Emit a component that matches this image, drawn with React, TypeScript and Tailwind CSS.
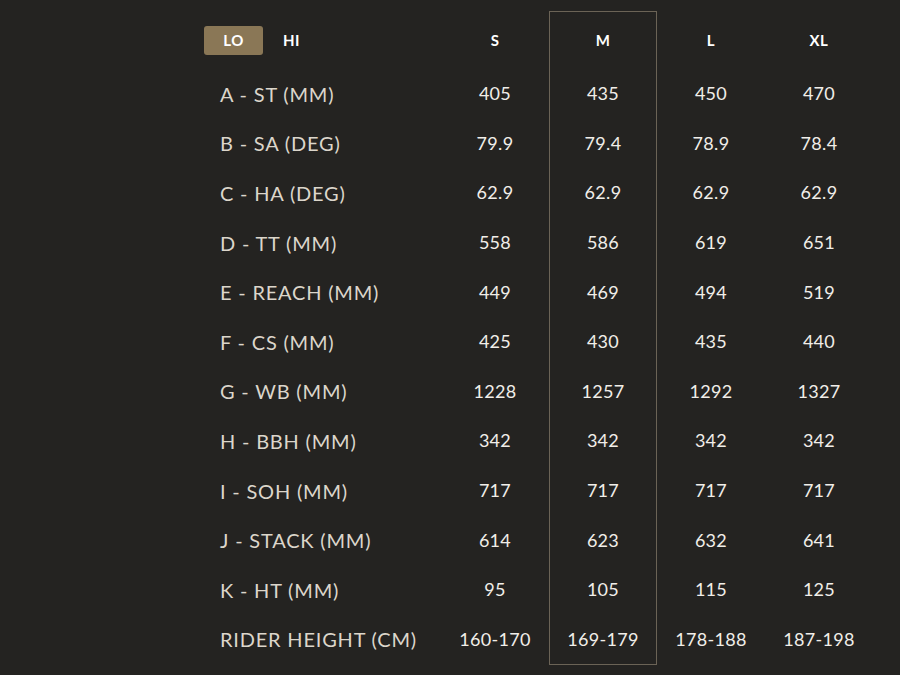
const sizes = ['S', 'M', 'L', 'XL'];

const rows: [string, string[]][] = [
  ['A - ST (MM)', ['405', '435', '450', '470']],
  ['B - SA (DEG)', ['79.9', '79.4', '78.9', '78.4']],
  ['C - HA (DEG)', ['62.9', '62.9', '62.9', '62.9']],
  ['D - TT (MM)', ['558', '586', '619', '651']],
  ['E - REACH (MM)', ['449', '469', '494', '519']],
  ['F - CS (MM)', ['425', '430', '435', '440']],
  ['G - WB (MM)', ['1228', '1257', '1292', '1327']],
  ['H - BBH (MM)', ['342', '342', '342', '342']],
  ['I - SOH (MM)', ['717', '717', '717', '717']],
  ['J - STACK (MM)', ['614', '623', '632', '641']],
  ['K - HT (MM)', ['95', '105', '115', '125']],
  ['RIDER HEIGHT (CM)', ['160-170', '169-179', '178-188', '187-198']],
];

const App = () => {
  return (
    <div className="w-[900px] h-[675px] bg-[#242321] overflow-hidden font-['Lato',sans-serif]">
      <div className="ml-[204px] mt-[11px] flex">
        {/* Labels column */}
        <div className="w-[237px] shrink-0">
          <div className="h-[58px] flex items-center gap-[20px]">
            <button className="w-[59px] h-[29px] rounded-[3px] bg-[#8a7756] text-white text-[15px] font-bold tracking-[0.5px] mt-px">
              LO
            </button>
            <button className="text-white text-[15px] font-bold tracking-[0.5px] mt-px">HI</button>
          </div>
          {rows.map(([label]) => (
            <div key={label} className="h-[49.6px] flex items-center pl-4 text-[20px] text-[#dcd6cb] tracking-[0.8px] whitespace-nowrap">
              {label}
            </div>
          ))}
        </div>

        {/* Size columns */}
        {sizes.map((size, i) => (
          <div
            key={size}
            className={`w-[108px] shrink-0 ${i === 1 ? 'border border-[#6b6356]' : 'border border-transparent'}`}
          >
            <div className="h-[57px] flex items-center justify-center text-white text-[15px] font-bold tracking-[0.5px]">
              {size}
            </div>
            {rows.map(([label, vals]) => (
              <div key={label} className="h-[49.6px] flex items-center justify-center text-[18px] text-[#f1eee9] tracking-[0.3px]">
                {vals[i]}
              </div>
            ))}
          </div>
        ))}
      </div>
    </div>
  );
};

export default App;
